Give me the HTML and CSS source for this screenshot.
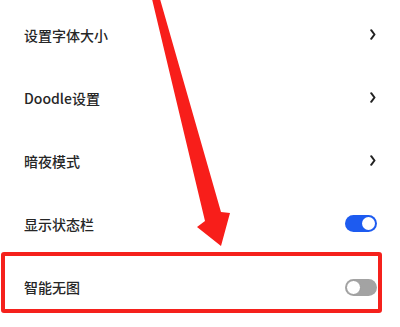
FILE: index.html
```html
<!DOCTYPE html>
<html lang="zh">
<head>
<meta charset="utf-8">
<link rel="stylesheet" href="styles.css">
</head>
<body>
<div class="screen">
  <ul class="list">
    <li class="row"><span class="label">设置字体大小</span>
      <svg class="chev" width="6" height="11" viewBox="0 0 6 11"><path d="M1.2 1.2 L4.5 5.5 L1.2 9.8" fill="none" stroke="#222" stroke-width="2" stroke-linecap="round" stroke-linejoin="round"/></svg>
    </li>
    <li class="row"><span class="label">Doodle设置</span>
      <svg class="chev" width="6" height="11" viewBox="0 0 6 11"><path d="M1.2 1.2 L4.5 5.5 L1.2 9.8" fill="none" stroke="#222" stroke-width="2" stroke-linecap="round" stroke-linejoin="round"/></svg>
    </li>
    <li class="row"><span class="label">暗夜模式</span>
      <svg class="chev" width="6" height="11" viewBox="0 0 6 11"><path d="M1.2 1.2 L4.5 5.5 L1.2 9.8" fill="none" stroke="#222" stroke-width="2" stroke-linecap="round" stroke-linejoin="round"/></svg>
    </li>
    <li class="row"><span class="label">显示状态栏</span>
      <span class="toggle on"><span class="knob"></span></span>
    </li>
    <li class="row"><span class="label">智能无图</span>
      <span class="toggle off"><span class="knob"></span></span>
    </li>
  </ul>
  <div class="highlight"></div>
  <svg class="arrow" width="400" height="327" viewBox="0 0 400 327">
    <polygon points="152,-1 160,-1 221,212 230,213 221,246 197,227 205,221" fill="#f81e1a"/>
  </svg>
</div>
</body>
</html>
```

FILE: styles.css
```css
* { box-sizing: border-box; }
html, body {
  margin: 0;
  padding: 0;
  background: #ffffff;
}
body {
  width: 400px;
  height: 327px;
  overflow: hidden;
  font-family: "Noto Sans CJK SC", "Noto Sans", sans-serif;
  color: #262626;
}
.screen {
  position: relative;
  width: 400px;
  height: 327px;
}
.list {
  list-style: none;
  margin: 0;
  padding: 3px 0 0 0;
}
.row {
  height: 63px;
  display: flex;
  align-items: center;
  justify-content: space-between;
  padding: 0 23px 0 24px;
}
.label {
  font-size: 14px;
  line-height: 20px;
  font-weight: 500;
}
.chev {
  display: block;
  margin-right: 1px;
}
.toggle {
  position: relative;
  display: block;
  width: 32px;
  height: 17px;
  border-radius: 9px;
}
.toggle.on { background: #1d5bf0; }
.toggle.off { background: #a3a3a3; margin-top: 1px; }
.knob {
  position: absolute;
  top: 2px;
  width: 13px;
  height: 13px;
  border-radius: 50%;
  background: #ffffff;
}
.toggle.on .knob { right: 2px; }
.toggle.off .knob { left: 1px; top: 1px; width: 15px; height: 15px; border: 1px solid #9a9a9a; }
.highlight {
  position: absolute;
  left: 1px;
  top: 252px;
  width: 381px;
  height: 61px;
  border: 4px solid #f5211c;
  border-radius: 3px;
}
.arrow {
  position: absolute;
  left: 0;
  top: 0;
  pointer-events: none;
}
```
